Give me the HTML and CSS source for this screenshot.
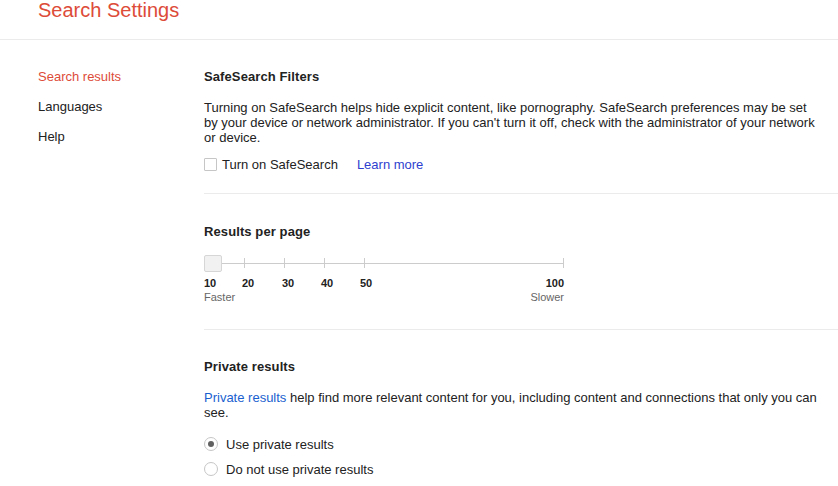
FILE: index.html
```html
<!DOCTYPE html>
<html>
<head>
<meta charset="utf-8">
<link rel="stylesheet" href="styles.css">
</head>
<body>
<header class="header">
  <h1 class="title">Search Settings</h1>
</header>
<div class="layout">
  <nav class="sidebar">
    <a class="nav-item active">Search results</a>
    <a class="nav-item">Languages</a>
    <a class="nav-item">Help</a>
  </nav>
  <main class="main">
    <section class="section section-safe">
      <h2 class="section-title">SafeSearch Filters</h2>
      <p class="desc">Turning on SafeSearch helps hide explicit content, like pornography. SafeSearch preferences may be set by your device or network administrator. If you can't turn it off, check with the administrator of your network or device.</p>
      <div class="check-row">
        <span class="checkbox"></span>
        <span class="check-label">Turn on SafeSearch</span>
        <a class="link learn">Learn more</a>
      </div>
    </section>
    <section class="section section-results">
      <h2 class="section-title">Results per page</h2>
      <div class="slider">
        <div class="track"></div>
        <span class="tick" style="left:40px"></span>
        <span class="tick" style="left:80px"></span>
        <span class="tick" style="left:120px"></span>
        <span class="tick" style="left:160px"></span>
        <span class="tick" style="left:359px"></span>
        <span class="handle"></span>
      </div>
      <div class="slider-labels">
        <span class="num" style="left:0px">10</span>
        <span class="num" style="left:38px">20</span>
        <span class="num" style="left:78px">30</span>
        <span class="num" style="left:117px">40</span>
        <span class="num" style="left:156px">50</span>
        <span class="num num-end">100</span>
      </div>
      <div class="speed-row">
        <span class="speed">Faster</span>
        <span class="speed">Slower</span>
      </div>
    </section>
    <section class="section section-private">
      <h2 class="section-title">Private results</h2>
      <p class="desc"><a class="link private-link">Private results</a> help find more relevant content for you, including content and connections that only you can see.</p>
      <div class="radio-row">
        <span class="radio checked"></span>
        <span class="radio-label">Use private results</span>
      </div>
      <div class="radio-row">
        <span class="radio"></span>
        <span class="radio-label">Do not use private results</span>
      </div>
    </section>
  </main>
</div>
</body>
</html>
```

FILE: styles.css
```css
* { box-sizing: border-box; }
html, body { margin: 0; padding: 0; background: #fff; }
body {
  font-family: Arial, "Liberation Sans", sans-serif;
  font-size: 13px;
  color: #222;
  width: 838px;
  overflow: hidden;
}
.header {
  height: 40px;
  border-bottom: 1px solid #ebebeb;
  padding-left: 38px;
}
.title {
  margin: 0;
  font-weight: normal;
  font-size: 20px;
  line-height: 21px;
  color: #dd4b39;
}
.layout {
  display: flex;
}
.sidebar {
  width: 204px;
  flex: none;
  padding: 22px 0 0 38px;
  display: flex;
  flex-direction: column;
}
.nav-item {
  line-height: 30px;
  color: #222;
}
.nav-item.active { color: #dd4b39; }
.main {
  flex: 1;
  min-width: 0;
}
.section {
  border-bottom: 1px solid #ebebeb;
}
.section-safe { padding: 29px 0 19px; }
.section-results { padding: 30px 0 25px; }
.section-private { padding: 29px 0 0; border-bottom: none; }
.section-title {
  margin: 0;
  font-size: 13px;
  line-height: 16px;
  font-weight: bold;
  color: #222;
  letter-spacing: 0.1px;
}
.desc {
  margin: 15px 0 0;
  line-height: 15px;
  max-width: 616px;
}
.section-private .desc { margin-top: 14.5px; }
.link { color: #2f3fcf; cursor: pointer; }
.private-link { color: #1a5fd0; }
.check-row {
  display: flex;
  align-items: center;
  height: 20px;
  margin-top: 9px;
}
.checkbox {
  width: 13px;
  height: 13px;
  border: 1px solid #c6c6c6;
  border-radius: 1px;
  background: #fff;
  flex: none;
}
.check-label { margin-left: 5px; }
.learn { margin-left: 19px; }
.slider {
  position: relative;
  width: 360px;
  height: 17px;
  margin-top: 15px;
}
.track {
  position: absolute;
  left: 0;
  right: 0;
  top: 8px;
  height: 1px;
  background: #ccc;
}
.tick {
  position: absolute;
  top: 3px;
  width: 1px;
  height: 10px;
  background: #ccc;
}
.handle {
  position: absolute;
  left: 0;
  top: 0;
  width: 18px;
  height: 17px;
  background: #f1f1f1;
  border: 1px solid #d6d6d6;
  border-radius: 2px;
}
.slider-labels {
  position: relative;
  width: 360px;
  height: 14px;
  margin-top: 4px;
}
.num {
  position: absolute;
  top: 0;
  font-size: 11px;
  line-height: 14px;
  font-weight: bold;
  color: #222;
}
.num-end { right: 0; }
.speed-row {
  width: 360px;
  display: flex;
  justify-content: space-between;
}
.speed {
  font-size: 11px;
  line-height: 14px;
  color: #666;
}
.radio-row {
  display: flex;
  align-items: center;
  height: 25px;
}
.section-private .desc + .radio-row { margin-top: 12px; }
.radio {
  width: 14px;
  height: 14px;
  border: 1px solid #c6c6c6;
  border-radius: 50%;
  flex: none;
  display: flex;
  align-items: center;
  justify-content: center;
  background: #fff;
}
.radio.checked::after {
  content: "";
  width: 6px;
  height: 6px;
  border-radius: 50%;
  background: #616161;
}
.radio-label { margin-left: 8px; }
```
